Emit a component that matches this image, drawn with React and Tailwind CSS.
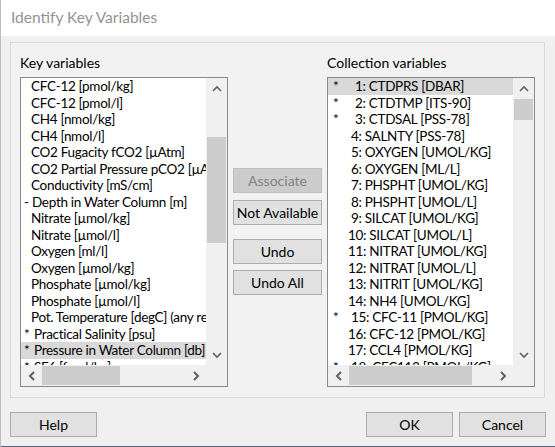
const keyVars = [
  { p: "", t: "CFC-12 [pmol/kg]" },
  { p: "", t: "CFC-12 [pmol/l]" },
  { p: "", t: "CH4 [nmol/kg]" },
  { p: "", t: "CH4 [nmol/l]" },
  { p: "", t: "CO2 Fugacity fCO2 [µAtm]" },
  { p: "", t: "CO2 Partial Pressure pCO2 [µAtm]" },
  { p: "", t: "Conductivity [mS/cm]" },
  { p: "-", t: "Depth in Water Column [m]" },
  { p: "", t: "Nitrate [µmol/kg]" },
  { p: "", t: "Nitrate [µmol/l]" },
  { p: "", t: "Oxygen [ml/l]" },
  { p: "", t: "Oxygen [µmol/kg]" },
  { p: "", t: "Phosphate [µmol/kg]" },
  { p: "", t: "Phosphate [µmol/l]" },
  { p: "", t: "Pot. Temperature [degC] (any reference)" },
  { p: "*", t: "Practical Salinity [psu]" },
  { p: "*", t: "Pressure in Water Column [db]", sel: true },
  { p: "*", t: "SF6 [fmol/kg]" },
];

// w = left offset of the text, star sits 5px in
const collVars = [
  { s: true, w: "w-[27px]", t: "1: CTDPRS [DBAR]", sel: true },
  { s: true, w: "w-[27px]", t: "2: CTDTMP [ITS-90]" },
  { s: true, w: "w-[27px]", t: "3: CTDSAL [PSS-78]" },
  { s: false, w: "w-[23px]", t: "4: SALNTY [PSS-78]" },
  { s: false, w: "w-[23px]", t: "5: OXYGEN [UMOL/KG]" },
  { s: false, w: "w-[23px]", t: "6: OXYGEN [ML/L]" },
  { s: false, w: "w-[23px]", t: "7: PHSPHT [UMOL/KG]" },
  { s: false, w: "w-[23px]", t: "8: PHSPHT [UMOL/L]" },
  { s: false, w: "w-[23px]", t: "9: SILCAT [UMOL/KG]" },
  { s: false, w: "w-[20px]", t: "10: SILCAT [UMOL/L]" },
  { s: false, w: "w-[20px]", t: "11: NITRAT [UMOL/KG]" },
  { s: false, w: "w-[20px]", t: "12: NITRAT [UMOL/L]" },
  { s: false, w: "w-[20px]", t: "13: NITRIT [UMOL/KG]" },
  { s: false, w: "w-[20px]", t: "14: NH4 [UMOL/KG]" },
  { s: true, w: "w-[23px]", t: "15: CFC-11 [PMOL/KG]" },
  { s: false, w: "w-[20px]", t: "16: CFC-12 [PMOL/KG]" },
  { s: false, w: "w-[20px]", t: "17: CCL4 [PMOL/KG]" },
  { s: true, w: "w-[23px]", t: "18: CFC113 [PMOL/KG]" },
];

function Chevron({ dir }) {
  const pts = {
    up: "1,6 5,2 9,6",
    down: "1,2 5,6 9,2",
    left: "6,1 2,5 6,9",
    right: "2,1 6,5 2,9",
  }[dir];
  const vert = dir === "up" || dir === "down";
  return (
    <svg
      width={vert ? 10 : 8}
      height={vert ? 8 : 10}
      viewBox={vert ? "0 0 10 8" : "0 0 8 10"}
      fill="none"
      stroke="#606060"
      strokeWidth={vert ? 1.6 : 2}
    >
      <polyline points={pts} />
    </svg>
  );
}

function ListBox({ children, vThumb, hThumb }) {
  return (
    <div className="flex h-[310px] w-[208px] flex-col border border-[#8a8a8a] bg-white">
      <div className="flex min-h-0 flex-1">
        <div className="min-w-0 flex-1 overflow-hidden text-[13.5px] tracking-[-0.3px]">{children}</div>
        <div className="flex w-[21px] flex-col bg-[#f0f0f0]">
          <div className="flex h-[21px] items-center justify-center">
            <Chevron dir="up" />
          </div>
          <div className="flex-1 px-[1px]">{vThumb}</div>
          <div className="flex h-[21px] items-center justify-center">
            <Chevron dir="down" />
          </div>
        </div>
      </div>
      <div className="flex h-[21px] bg-[#f0f0f0]">
        <div className="flex w-[21px] items-center justify-center">
          <Chevron dir="left" />
        </div>
        <div className="flex-1 py-[1px]">{hThumb}</div>
        <div className="flex w-[21px] items-center justify-center">
          <Chevron dir="right" />
        </div>
        <div className="w-[21px]" />
      </div>
    </div>
  );
}

function Btn({ children, disabled, className = "" }) {
  return (
    <div
      className={`flex h-[25px] items-center justify-center border ${
        disabled
          ? "border-[#bfbfbf] bg-[#cccccc] text-[#838383]"
          : "border-[#adadad] bg-[#e1e1e1] text-black"
      } ${className}`}
    >
      {children}
    </div>
  );
}

export default function App() {
  return (
    <div
      className="relative h-[447px] w-[555px] overflow-hidden border-l border-[#bdbdbd] bg-[#f0f0f0] text-[14px] text-black"
      style={{ fontFamily: 'Lato, "Noto Sans", sans-serif' }}
    >
      {/* Title bar */}
      <div className="flex h-[36px] items-center bg-white pl-[10px] text-[15.5px] text-[#939393]">
        Identify Key Variables
      </div>

      {/* Group box */}
      <div className="ml-[9px] mt-[6px] flex w-[535px] border border-[#dadada] bg-[#f2f2f2] pb-[10px] pl-[9px] pr-[9px] pt-[10px]">
        <div className="w-[208px]">
          <div className="mb-[4px] h-[20px] leading-[20px]">Key variables</div>
          <ListBox
            vThumb={<div className="mt-[38px] h-[106px] bg-[#cdcdcd]" />}
            hThumb={<div className="h-full w-[78px] bg-[#cdcdcd]" />}
          >
            {keyVars.map((r, i) => (
              <div
                key={i}
                className={`flex h-[16.5px] items-center whitespace-nowrap leading-[16.5px] ${
                  r.sel ? "bg-[#d9d9d9]" : ""
                } ${r.p ? "pl-[3px]" : "pl-[10px]"}`}
              >
                {r.p === "*" && <span className="w-[10px] shrink-0">*</span>}
                {r.p === "-" && <span className="w-[8px] shrink-0">-</span>}
                <span className="shrink-0">{r.t}</span>
              </div>
            ))}
          </ListBox>
        </div>

        <div className="ml-[5px] mr-[5px] flex w-[89px] flex-col pt-[115px]">
          <Btn disabled>Associate</Btn>
          <Btn className="mt-[7px]">Not Available</Btn>
          <Btn className="mt-[14px]">Undo</Btn>
          <Btn className="mt-[6px]">Undo All</Btn>
        </div>

        <div className="w-[208px]">
          <div className="mb-[4px] h-[20px] leading-[20px]">Collection variables</div>
          <ListBox
            vThumb={<div className="h-[21px] bg-[#cdcdcd]" />}
            hThumb={<div className="h-full w-[123px] bg-[#cdcdcd]" />}
          >
            {collVars.map((r, i) => (
              <div
                key={i}
                className={`flex h-[16.5px] items-center whitespace-nowrap leading-[16.5px] ${
                  r.sel ? "bg-[#d9d9d9]" : ""
                }`}
              >
                <span className={`${r.w} shrink-0 pl-[5px]`}>{r.s ? "*" : ""}</span>
                <span className="shrink-0">{r.t}</span>
              </div>
            ))}
          </ListBox>
        </div>
      </div>

      {/* Bottom buttons */}
      <div className="mt-[14px] flex px-[9px]">
        <Btn className="w-[87px]">Help</Btn>
        <div className="flex-1" />
        <Btn className="w-[87px]">OK</Btn>
        <Btn className="ml-[6px] w-[87px]">Cancel</Btn>
      </div>

      <div className="absolute bottom-0 left-0 h-[1px] w-full bg-[#5b6385]" />
    </div>
  );
}
